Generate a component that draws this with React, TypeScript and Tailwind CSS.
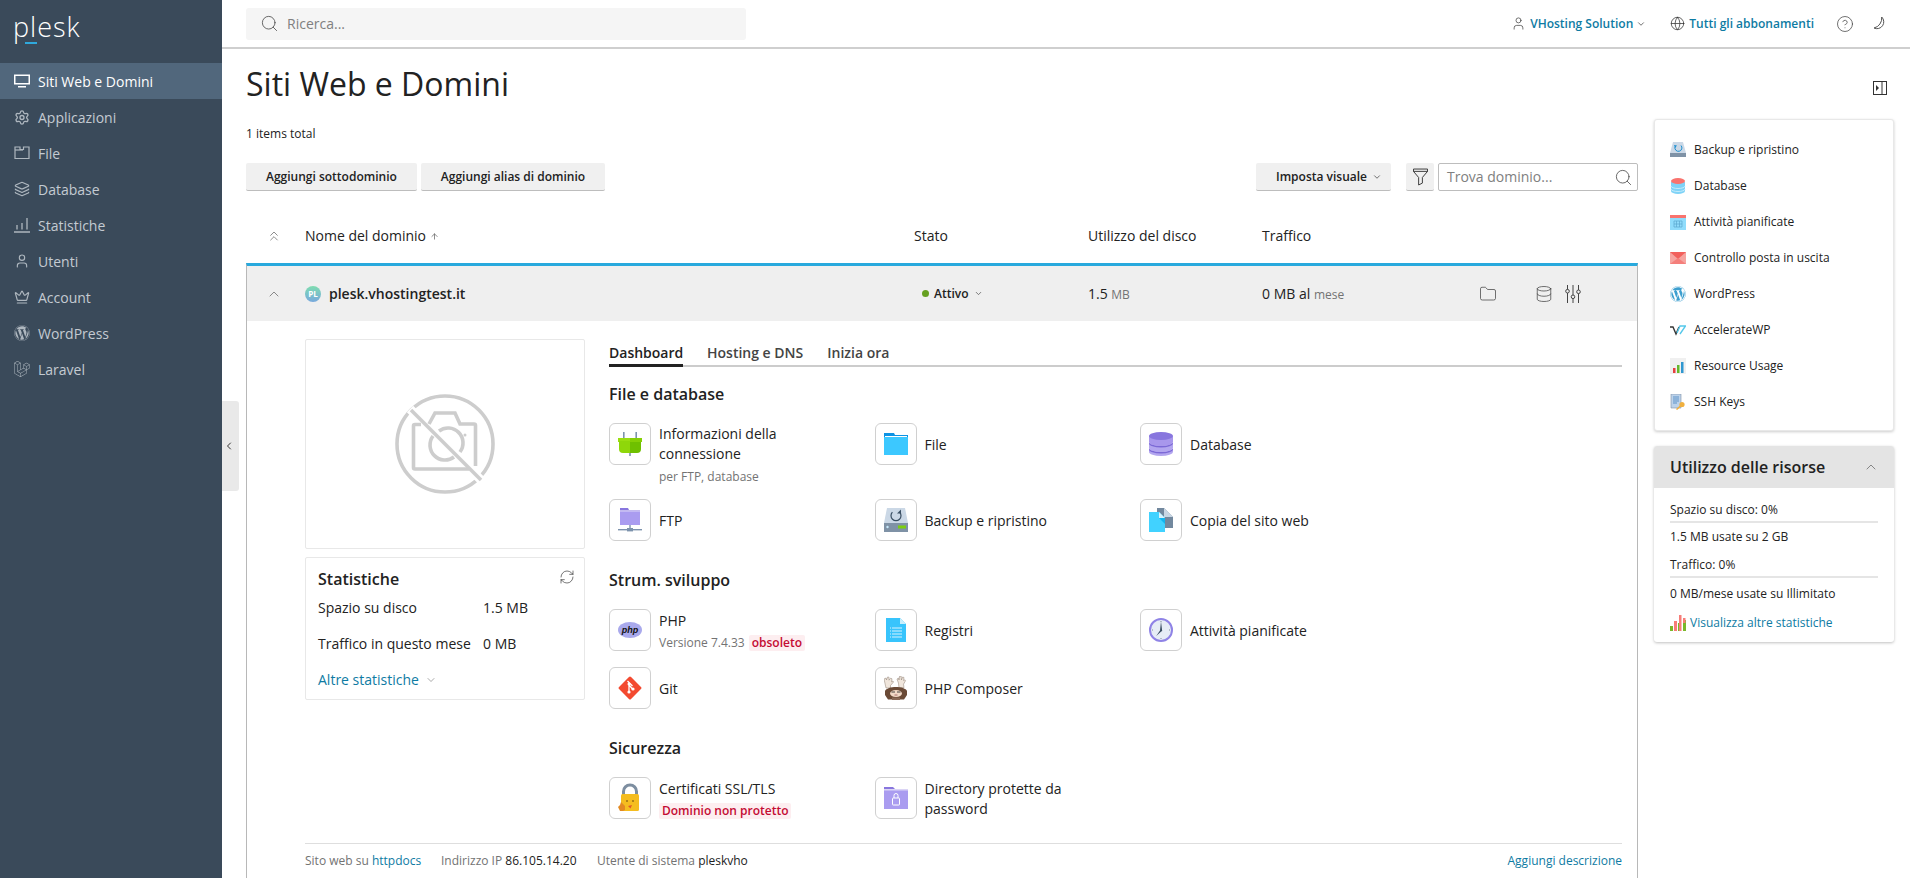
import React from "react";
import { Settings, Layers, User, Crown, ChevronDown, ChevronUp, ChevronsUp, ChevronLeft, Search, Globe, CircleHelp, Database, Folder, RefreshCw, ArrowUp } from "lucide-react";
import { SiLaravel } from "react-icons/si";
import { FaWordpress } from "react-icons/fa";

const MonitorIcon = () => (
  <svg width="16" height="16" viewBox="0 0 16 16"><path d="M0 1.5h16v10H0z" fill="#fff" /><path d="M1.5 3h13v7h-13z" fill="#51677c" /><path d="M4 13h8v1.5H4z" fill="#fff" /></svg>
);
const FileNavIcon = () => (
  <svg width="16" height="16" viewBox="0 0 16 16" fill="none" stroke="#aeb7bf" strokeWidth="1.2"><path d="M1 2h5v2.5h3.5V2H15v11.5H1z" /><path d="M1 5h8" /></svg>
);
const StatsNavIcon = () => (
  <svg width="16" height="16" viewBox="0 0 16 16" fill="none" stroke="#aeb7bf" strokeWidth="1.3"><path d="M0 15h16M3 8v4.5M8 6v6.5M13 1v11.5" /></svg>
);
const nav: [string, React.ReactNode][] = [
  ["Siti Web e Domini", <MonitorIcon />],
  ["Applicazioni", <Settings size={17} color="#aeb7bf" strokeWidth={2} />],
  ["File", <FileNavIcon />],
  ["Database", <Layers size={18} color="#aeb7bf" strokeWidth={1.8} />],
  ["Statistiche", <StatsNavIcon />],
  ["Utenti", <User size={18} color="#aeb7bf" strokeWidth={1.7} />],
  ["Account", <Crown size={18} color="#aeb7bf" strokeWidth={1.8} />],
  ["WordPress", <FaWordpress size={16} color="#aeb7bf" />],
  ["Laravel", <SiLaravel size={16} color="#aeb7bf" />],
];

const Box = ({ children }: { children: React.ReactNode }) => (
  <div className="w-[42px] h-[42px] shrink-0 rounded-[6px] border border-[#d0d0d0] flex items-center justify-center bg-white">{children}</div>
);

const PlugIc = () => (
  <svg width="24" height="24" viewBox="0 0 24 24"><path d="M5 0h1.6v6H5zM17.4 0H19v6h-1.6zM11.2 18h1.6v6h-1.6z" fill="#7d93ad" /><path d="M0 6h24v4H0z" fill="#9ade10" /><path d="M1 9h11v12H5a4 4 0 0 1-4-4z" fill="#8fd70a" /><path d="M12 9h11v8a4 4 0 0 1-4 4h-7z" fill="#6fc000" /><path d="M12 6h12v4H12z" fill="#85cf05" /></svg>
);
const FolderIc = () => (
  <svg width="24" height="24" viewBox="0 0 24 24"><path d="M0 1h10l1 2h13v20H0z" fill="#0c93e4" /><path d="M0 5h24v18H0z" fill="#3cc8ff" /><path d="M1 4h22v1H1z" fill="#fff" /></svg>
);
const DbIc = () => (
  <svg width="24" height="24" viewBox="0 0 24 24">
    <path d="M0 17h24v3a12 4 0 0 1-24 0z" fill="#b3a6ef" />
    <path d="M0 16a12 4 0 0 0 24 0v1.5a12 4 0 0 1-24 0z" fill="#7c69d6" />
    <path d="M0 11h24v5a12 4 0 0 1-24 0z" fill="#b3a6ef" />
    <path d="M0 10a12 4 0 0 0 24 0v1.5a12 4 0 0 1-24 0z" fill="#7c69d6" />
    <path d="M0 4h24v6a12 4 0 0 1-24 0z" fill="#a897ec" />
    <ellipse cx="12" cy="4" rx="12" ry="4" fill="#8876de" />
  </svg>
);
const FtpIc = () => (
  <svg width="24" height="24" viewBox="0 0 24 24"><path d="M2 0h8l1 2h11v15H2z" fill="#8876de" /><path d="M2 3h20v14H2z" fill="#aa9cf0" /><path d="M2 2.5h20v.8H2z" fill="#fff" /><path d="M11.3 17h1.4v4h-1.4z" fill="#7d93ad" /><path d="M0 21h24v1.4H0z" fill="#7d93ad" /><path d="M9 20h6v3.4H9z" fill="#7d93ad" /></svg>
);
const BackupIc = () => (
  <svg width="24" height="24" viewBox="0 0 24 24"><path d="M3 0h18l3 15H0z" fill="#cbd8e6" /><path d="M0 15h24v9H0z" fill="#7f92a6" /><path d="M15.6 4.2A5 5 0 1 1 8.4 4.2" fill="none" stroke="#3a4f63" strokeWidth="1.2" /><path d="M17 1.5v4h-4z" fill="#3a4f63" /><path d="M14 17.5h8v3h-8z" fill="#7ccf0e" /><circle cx="3.5" cy="19" r="1.2" fill="#c7e9fb" /></svg>
);
const CopyIc = () => (
  <svg width="24" height="24" viewBox="0 0 24 24"><path d="M8 0h7l9 9v11H8z" fill="#72889e" /><path d="M15 0l9 9h-9z" fill="#c8d6e3" /><path d="M0 4h10l6 6v14H0z" fill="#41d2ff" /><path d="M10 4l6 6h-6z" fill="#d6f3fd" /><path d="M10 10h6v6z" fill="#10b5f0" /></svg>
);
const PhpIc = () => (
  <svg width="24" height="24" viewBox="0 0 24 24"><ellipse cx="12" cy="12" rx="12" ry="8" fill="#a9a9ec" /><text x="12" y="15" textAnchor="middle" fontFamily="'Liberation Sans',sans-serif" fontWeight="700" fontStyle="italic" fontSize="9" fill="#111">php</text></svg>
);
const LogIc = () => (
  <svg width="24" height="24" viewBox="0 0 24 24"><path d="M2 0h14l6 6v18H2z" fill="#38c4fc" /><path d="M16 0l6 6h-6z" fill="#c9eefc" /><path d="M8 10h10M8 13h10M8 16h10M8 19h10" stroke="#fff" strokeWidth=".8" /><path d="M6 10h1M6 13h1M6 16h1M6 19h1" stroke="#fff" strokeWidth=".8" /></svg>
);
const ClockIc = () => (
  <svg width="24" height="24" viewBox="0 0 24 24"><circle cx="12" cy="12" r="11" fill="#e6edf6" stroke="#8f83e6" strokeWidth="2" /><path d="M12 3.5l1.2 9.5-1 .6-5 4.4 3.8-5.4z" fill="#3a4f63" /><path d="M12 3v1M21 12h-1M3 12h1M12 21v-1" stroke="#3a4f63" strokeWidth=".6" /></svg>
);
const GitIc = () => (
  <svg width="24" height="24" viewBox="0 0 24 24"><rect x="3.5" y="3.5" width="17" height="17" rx="1.5" fill="#f34a30" transform="rotate(45 12 12)" /><path d="M9.5 5l5 5M11 8v8M11.5 9.5l3 3.5" stroke="#fff" strokeWidth="1.3" fill="none" /><circle cx="11" cy="8" r="1.5" fill="#fff" /><circle cx="11" cy="16" r="1.6" fill="#fff" /><circle cx="15" cy="13" r="1.6" fill="#fff" /></svg>
);
const ComposerIc = () => (
  <svg width="24" height="24" viewBox="0 0 24 24">
    <path d="M0 3l2-1 .5 2 1-3 1.5.2 0 3 1.5-2 1.5.6-.5 3 1.5-.8.5 1-3 3.5v2.5H2z" fill="#f0e6dc" stroke="#8d7d70" strokeWidth=".5" />
    <path d="M13 3l1.5-1 .5 2 .7-4 1.5.2.2 3.8 1.2-3 1.4.5-.5 3 1.5-.7.5 1-2 3.4.5 3.5h-5l-.5-4.5z" fill="#f0e6dc" stroke="#8d7d70" strokeWidth=".5" />
    <path d="M1 15c1-2.5 6-4 11-4s10 1.5 11 4v4l-3 4.500H4l-3-4.500z" fill="#6a4a36" />
    <ellipse cx="12" cy="17.5" rx="6" ry="3.5" fill="#f1d9c7" />
    <path d="M7.5 16h3.500M13 16h3.500" stroke="#333" strokeWidth=".9" />
    <path d="M10.5 19h3" stroke="#955" strokeWidth=".8" />
    <path d="M8 21.5h8V24H8z" fill="#8a6a58" />
  </svg>
);
const LockIc = () => (
  <svg width="24" height="30" viewBox="0 0 24 30"><path d="M5.5 12V8.5a6.5 6.5 0 0 1 13 0V12" fill="none" stroke="#7d8ea0" strokeWidth="3" /><rect x="3" y="11" width="18" height="17" rx="1.5" fill="#f5bd1f" /><path d="M10 23l4-1-1.5 3.5z" fill="#e0582a" /><circle cx="9" cy="18" r=".8" fill="#5a3a10" /><circle cx="15" cy="18" r=".8" fill="#5a3a10" /><path d="M0 24l2-2 1-3 2 2 2 2v4l-2 1H2z" fill="#e38a22" /></svg>
);
const DirLockIc = () => (
  <svg width="24" height="24" viewBox="0 0 24 24"><path d="M0 1h9l2 2h13v20H0z" fill="#8876de" /><path d="M0 4h24v19H0z" fill="#aa9cf0" /><path d="M0 3.3h24v1H0z" fill="#fff" /><rect x="8.5" y="12" width="7" height="7" rx=".6" fill="none" stroke="#fff" strokeWidth="1" /><path d="M10 12V9.5a2 2 0 0 1 4 0V12" fill="none" stroke="#fff" strokeWidth="1" /></svg>
);
const FunnelIc = () => (
  <svg width="15" height="18" viewBox="0 0 16 18" fill="none" stroke="#333" strokeWidth="1"><path d="M.5.5h15V3L10 9.5v6l-4 2v-8L.5 3z" /><path d="M.5 3h15" /></svg>
);
const SlidersIc = () => (
  <svg width="16" height="18" viewBox="0 0 16 18" fill="none" stroke="#444" strokeWidth="1" className="ml-[12px]"><path d="M2.5 0v4.500M2.5 8v10M8 0v10M8 13.500V18M13.5 0v5M13.5 8.500V18" /><circle cx="2.5" cy="6.2" r="1.8" /><circle cx="8" cy="11.8" r="1.8" /><circle cx="13.5" cy="6.8" r="1.8" /></svg>
);
const MoonIc = () => (
  <svg width="16" height="16" viewBox="0 0 16 16" fill="none" stroke="#555" strokeWidth="1" className="ml-[19px]"><path d="M8.7 1A6.800 6.800 0 0 1 1 12 10 10 0 0 0 8.700 1z" /></svg>
);

const Tile = ({ icon, children }: { icon: React.ReactNode; children: React.ReactNode }) => (
  <div className="flex gap-2 items-start">
    <Box>{icon}</Box>
    <div className="min-h-[42px] pt-[2px] flex flex-col justify-center text-sm leading-5 text-[#222] max-w-[172px]">{children}</div>
  </div>
);
const Badge = ({ children }: { children: React.ReactNode }) => (
  <span className="h-4 px-[3px] bg-[#fdeef0] text-[#c40b33] font-semibold text-xs leading-4 rounded-[2px] whitespace-nowrap">{children}</span>
);
const H3 = ({ children, first }: { children: React.ReactNode; first?: boolean }) => (
  <h3 className={`text-base leading-6 font-semibold text-[#222] mb-[17px] ${first ? "mt-[15px]" : "mt-[27px]"}`}>{children}</h3>
);
const Grid = ({ children }: { children: React.ReactNode }) => (
  <div className="grid grid-cols-[265.5px_265.5px_1fr] gap-y-3">{children}</div>
);

const side: [string, React.ReactNode][] = [
  ["Backup e ripristino", <svg width="16" height="16" viewBox="0 0 16 16"><path d="M3 0h10l3 11H0z" fill="#cbd8e6" /><path d="M0 11h16v4H0z" fill="#7f92a6" /><path d="M11 3.5A3.5 3.5 0 1 1 5 5" fill="none" stroke="#1d8fd0" strokeWidth="1" /><path d="M4 3l3 .5-2 2.5z" fill="#1d8fd0" /></svg>],
  ["Database", <svg width="16" height="16" viewBox="0 0 16 16"><path d="M1 4h14v9a7 3 0 0 1-14 0z" fill="#7fd3f7" /><path d="M1 8a7 2.5 0 0 0 14 0M1 11a7 2.5 0 0 0 14 0" fill="none" stroke="#c4ecfc" /><ellipse cx="8" cy="3" rx="7" ry="3" fill="#f9736e" /></svg>],
  ["Attività pianificate", <svg width="16" height="16" viewBox="0 0 16 16"><path d="M0 1h16v15H0z" fill="#8fdcfb" /><path d="M0 1h16v3H0z" fill="#f9736e" /><path d="M4 7h8v6H4zM6.5 7v6M9.5 7v6M4 10h8" fill="none" stroke="#5aa6cf" strokeWidth=".7" /></svg>],
  ["Controllo posta in uscita", <svg width="16" height="14" viewBox="0 0 16 14"><path d="M0 1h16v12H0z" fill="#f6a4a0" /><path d="M0 1l8 7 8-7z" fill="#f2605c" /><path d="M0 13l8-6 8 6z" fill="#f47f7b" /></svg>],
  ["WordPress", <FaWordpress size={16} color="#3d9fcf" />],
  ["AccelerateWP", <svg width="16" height="16" viewBox="0 0 16 16" fill="none"><path d="M0 5h3l3 7 3-7" stroke="#333" strokeWidth="1.4" /><path d="M7 11l3-7h5.500l-5.500 8" stroke="#56c8ea" strokeWidth="1.4" /></svg>],
  ["Resource Usage", <svg width="16" height="16" viewBox="0 0 16 16"><path d="M0 0h16v16H0z" fill="#f0f0f0" /><path d="M3 10h2.5v5H3z" fill="#e54040" /><path d="M7 7h2.5v8H7z" fill="#63b82a" /><path d="M11 4h2.5v11H11z" fill="#2f97d0" /></svg>],
  ["SSH Keys", <svg width="16" height="16" viewBox="0 0 16 16"><path d="M1 0h10v14H1z" fill="#bcd2ea" stroke="#7f92a6" strokeWidth=".6" /><path d="M3 3h6M3 5h6M3 7h6M3 9h4" stroke="#5c93c9" /><circle cx="12" cy="10.5" r="2.6" fill="#f0b03f" /><path d="M10.5 12l-4 3.5" stroke="#f0b03f" strokeWidth="1.6" /></svg>],
];

export default function App() {
  return (
    <div className="relative flex h-[878px] w-[1910px] overflow-hidden bg-white text-[#222] font-['Open_Sans',sans-serif]">
      <aside className="w-[222px] shrink-0 bg-[#3a4a5a]">
        <div className="h-[63px] pl-[13px] pt-[10px] relative">
          <span className="block text-[27px] leading-[34px] font-light text-white tracking-[1px]">plesk</span>
          <span className="absolute left-[25px] top-[42px] w-[12px] h-[2px] bg-[#2fa9dc]" />
        </div>
        {nav.map(([t, ic], i) => (
          <div key={t} className={`h-9 flex items-center pl-[14px] gap-2 text-sm ${i === 0 ? "bg-[#51677c] text-white" : "text-[#c4cbd2]"}`}>
            <span className="w-4 flex justify-center">{ic}</span>
            <span className="pt-[2px]">{t}</span>
          </div>
        ))}
      </aside>
      <div className="absolute left-[222px] top-[401px] w-[17px] h-[90px] bg-[#e9e9e9] rounded-r-[3px] flex items-center justify-center pr-[3px]">
        <ChevronLeft size={12} color="#333" strokeWidth={2} />
      </div>
      <div className="flex-1 min-w-0 flex flex-col">
        <header className="h-[49px] shrink-0 border-b-2 border-[#cfcfcf] flex items-center pl-6 pr-[21px]">
          <div className="w-[500px] h-8 bg-[#f5f5f5] rounded-[3px] flex items-center pl-[14px] gap-2">
            <Search size={19} color="#444" strokeWidth={1} />
            <span className="text-sm text-[#808080]">Ricerca...</span>
          </div>
          <div className="ml-auto flex items-center text-xs font-semibold text-[#0e7ba3]">
            <User size={15} color="#444" strokeWidth={1.2} />
            <span className="ml-[4px]">VHosting Solution</span>
            <ChevronDown size={10} color="#555" className="ml-[3px]" />
            <Globe size={15} color="#333" strokeWidth={1.2} className="ml-[24px]" />
            <span className="ml-[4px]">Tutti gli abbonamenti</span>
            <CircleHelp size={18} color="#444" strokeWidth={1} className="ml-[22px]" />
            <MoonIc />
          </div>
        </header>
        <div className="flex-1 pl-6 pr-4 min-h-0">
          <div className="h-[70px] flex items-center justify-between pr-[7px]">
            <h1 className="text-[32px] leading-[44px] font-normal text-[#222]">Siti Web e Domini</h1>
            <svg width="14" height="14" viewBox="0 0 14 14" className="mt-[8px]"><rect x=".5" y=".5" width="13" height="13" fill="none" stroke="#333" /><path d="M9 0v14" stroke="#333" /><path d="M3 4l3 3-3 3z" fill="#333" /></svg>
          </div>
          <div className="flex gap-4 items-start">
            <main className="w-[1392px]">
              <p className="pt-[7px] text-xs leading-4 text-[#222]">1 items total</p>
              <div className="mt-[21px] flex items-center h-7 text-xs font-semibold">
                <button className="h-7 pt-[1px] px-5 bg-[#f0f0f0] border-b border-[#bdbdbd] rounded-[2px]">Aggiungi sottodominio</button>
                <button className="h-7 pt-[1px] ml-1 px-5 bg-[#f0f0f0] border-b border-[#bdbdbd] rounded-[2px]">Aggiungi alias di dominio</button>
                <button className="h-7 pt-[1px] ml-auto pl-5 pr-[9px] bg-[#f0f0f0] border-b border-[#bdbdbd] rounded-[2px] flex items-center gap-[5px]">Imposta visuale <ChevronDown size={10} color="#555" /></button>
                <button className="h-7 w-7 ml-[15px] bg-[#f0f0f0] border-b border-[#bdbdbd] rounded-[2px] flex items-center justify-center"><FunnelIc /></button>
                <div className="h-7 w-[200px] ml-1 border border-[#bdbdbd] rounded-[2px] flex items-center justify-between pl-2 pr-[4px]">
                  <span className="text-sm font-normal text-[#808080]">Trova dominio...</span>
                  <Search size={19} color="#444" strokeWidth={1} />
                </div>
              </div>
              <div className="mt-[18px] h-[54px] grid grid-cols-[59px_609px_174px_174px_1fr] items-center text-sm text-[#222]">
                <span className="pl-[20px]"><ChevronsUp size={16} color="#555" strokeWidth={1} /></span>
                <span className="flex items-center gap-[4px]">Nome del dominio <ArrowUp size={9} color="#666" /></span>
                <span>Stato</span>
                <span>Utilizzo del disco</span>
                <span>Traffico</span>
              </div>
              <section className="border-t-[3px] border-t-[#28a9dd] border-x border-x-[#b8b8b8]">
                <div className="h-[55px] bg-[#efefef] grid grid-cols-[58px_609px_174px_174px_1fr] items-center text-sm">
                  <span className="pl-[19px]"><ChevronUp size={16} color="#555" strokeWidth={1} /></span>
                  <span className="flex items-center gap-2 font-semibold">
                    <span className="w-4 h-4 rounded-full bg-gradient-to-b from-[#7fdcaf] to-[#78a8dc] text-white text-[8px] font-bold flex items-center justify-center leading-none">PL</span>
                    plesk.vhostingtest.it
                  </span>
                  <span className="pl-2 flex items-center text-xs font-semibold">
                    <span className="w-[7px] h-[7px] rounded-full bg-[#66a020] mr-[5px]" />Attivo<ChevronDown size={9} color="#555" className="ml-[5px]" />
                  </span>
                  <span>1.5 <span className="text-xs text-[#737373]">MB</span></span>
                  <span className="flex items-center">
                    <span className="whitespace-pre">0 MB al <span className="text-xs text-[#737373]">mese</span></span>
                    <span className="ml-[135px] flex items-center">
                      <Folder size={18} color="#444" strokeWidth={1} />
                      <Database size={18} color="#444" strokeWidth={1} className="ml-[38px]" />
                      <SlidersIc />
                    </span>
                  </span>
                </div>
                <div className="pl-[58px] pr-[15px] pt-[18px]">
                  <div className="flex gap-6">
                    <div className="w-[280px] shrink-0">
                      <div className="h-[210px] border border-[#e8e8e8] rounded-[2px] flex items-center justify-center">
                        <svg width="100" height="100" viewBox="0 0 100 100" fill="none" stroke="#cdcdcd" strokeWidth="3.6">
                          <circle cx="50" cy="50" r="48" />
                          <path d="M15 15l85 85" stroke="#fff" strokeWidth="9" />
                          <path d="M16 16l70 70" />
                          <path d="M34 30l6-11h20l5 11h14a1.5 1.5 0 0 1 1.5 1.5V72M74 75H20a1.5 1.5 0 0 1-1.5-1.5V32a1.5 1.5 0 0 1 1.5-1.5h6" />
                          <path d="M38 42a15 15 0 0 0 21 21M44 37a15 15 0 0 1 21 21" />
                          <circle cx="70" cy="41" r="1.5" fill="#cdcdcd" stroke="none" />
                        </svg>
                      </div>
                      <div className="mt-2 h-[143px] border border-[#e8e8e8] rounded-[2px] pl-3 pr-2 relative text-sm">
                        <div className="pt-[10px] text-base leading-[22px] font-semibold">Statistiche</div>
                        <RefreshCw size={16} color="#333" strokeWidth={1} className="absolute right-[9px] top-[11px]" />
                        <div className="h-9 flex items-center"><span className="w-[165px]">Spazio su disco</span><span>1.5 MB</span></div>
                        <div className="h-9 flex items-center"><span className="w-[165px]">Traffico in questo mese</span><span>0 MB</span></div>
                        <div className="h-9 flex items-center text-[#0e7ba3]">Altre statistiche<ChevronDown size={12} color="#555" strokeWidth={1} className="ml-[6px]" /></div>
                      </div>
                    </div>
                    <div className="flex-1 min-w-0">
                      <div className="flex gap-6 h-7 border-b-2 border-[#cccccc] text-sm font-semibold text-[#444]">
                        <span className="h-7 w-[74px] border-b-[3px] border-[#222] text-[#222] leading-[28px]">Dashboard</span>
                        <span className="leading-[28px]">Hosting e DNS</span>
                        <span className="leading-[28px]">Inizia ora</span>
                      </div>
                      <H3 first>File e database</H3>
                      <Grid>
                        <Tile icon={<PlugIc />}><div className="-mt-[1px]">Informazioni della connessione</div><div className="text-xs leading-[18px] mt-[4px] pb-[1px] text-[#737373]">per FTP, database</div></Tile>
                        <Tile icon={<FolderIc />}>File</Tile>
                        <Tile icon={<DbIc />}>Database</Tile>
                        <Tile icon={<FtpIc />}>FTP</Tile>
                        <Tile icon={<BackupIc />}>Backup e ripristino</Tile>
                        <Tile icon={<CopyIc />}>Copia del sito web</Tile>
                      </Grid>
                      <H3>Strum. sviluppo</H3>
                      <Grid>
                        <Tile icon={<PhpIc />}><div>PHP</div><div className="h-6 flex items-center gap-[4px] text-xs text-[#737373] whitespace-nowrap">Versione 7.4.33 <Badge>obsoleto</Badge></div></Tile>
                        <Tile icon={<LogIc />}>Registri</Tile>
                        <Tile icon={<ClockIc />}>Attività pianificate</Tile>
                        <Tile icon={<GitIc />}>Git</Tile>
                        <Tile icon={<ComposerIc />}>PHP Composer</Tile>
                      </Grid>
                      <H3>Sicurezza</H3>
                      <Grid>
                        <Tile icon={<LockIc />}><div>Certificati SSL/TLS</div><div className="h-6 flex items-center"><Badge>Dominio non protetto</Badge></div></Tile>
                        <Tile icon={<DirLockIc />}><div>Directory protette da password</div></Tile>
                      </Grid>
                    </div>
                  </div>
                  <div className="mt-5 border-t border-[#dedede] h-[35px] flex items-center text-xs text-[#737373]">
                    <span className="w-[136px]">Sito web su <span className="text-[#0e7ba3]">httpdocs</span></span>
                    <span className="w-[156px]">Indirizzo IP <span className="text-[#222]">86.105.14.20</span></span>
                    <span>Utente di sistema <span className="text-[#222]">pleskvho</span></span>
                    <span className="ml-auto text-[#0e7ba3]">Aggiungi descrizione</span>
                  </div>
                </div>
              </section>
            </main>
            <div className="w-[240px] shrink-0">
              <div className="h-[312px] rounded-[3px] bg-white border border-[#e8e8e8] shadow-[0_1px_3px_rgba(0,0,0,0.2)] pl-[15px] pt-[12px]">
                {side.map(([t, ic]) => (
                  <div key={t} className="h-9 flex items-center gap-2 text-xs text-[#222]">
                    <span className="w-4 flex justify-center">{ic}</span>{t}
                  </div>
                ))}
              </div>
              <div className="mt-[15px] h-[196px] rounded-[3px] bg-white shadow-[0_1px_3px_rgba(0,0,0,0.25)] text-xs text-[#222] overflow-hidden">
                <div className="h-[42px] bg-[#e4e4e4] pl-4 pr-[15px] flex items-center justify-between">
                  <span className="text-base font-semibold">Utilizzo delle risorse</span>
                  <ChevronUp size={16} color="#555" strokeWidth={1} />
                </div>
                <div className="px-4">
                  <div className="pt-[14px] pb-[3px] leading-4 border-b-2 border-[#e5e5e5]">Spazio su disco: 0%</div>
                  <div className="mt-[6px] leading-4">1.5 MB usate su 2 GB</div>
                  <div className="mt-3 pb-[3px] leading-4 border-b-2 border-[#e5e5e5]">Traffico: 0%</div>
                  <div className="mt-2 leading-4">0 MB/mese usate su Illimitato</div>
                  <div className="mt-[13px] h-4 flex items-center gap-[4px] text-[#0e7ba3]">
                    <svg width="16" height="16" viewBox="0 0 16 16"><path d="M0 11h3v5H0zM8 8h3v8H8zM13 5h3v11h-3z" fill="#7ab82a" /><path d="M4 6h3v10H4zM9 0h2.5v16H9zM13 3h2.5v5H13z" fill="#f77d78" /></svg>
                    Visualizza altre statistiche
                  </div>
                </div>
              </div>
            </div>
          </div>
        </div>
      </div>
    </div>
  );
}
